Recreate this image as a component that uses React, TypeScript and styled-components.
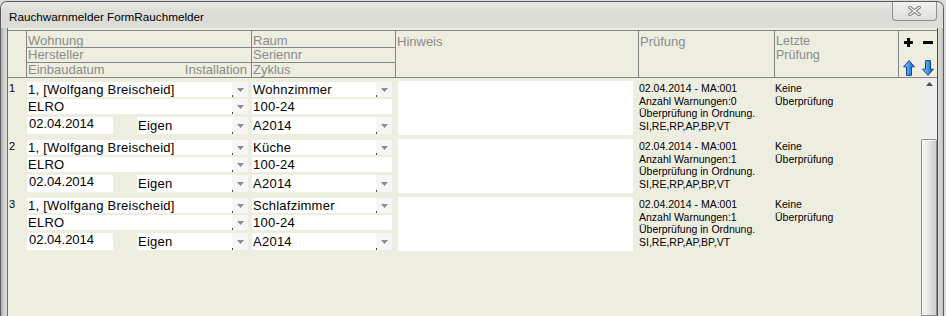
import React from "react";
import styled, { createGlobalStyle } from "styled-components";

const LINE = "#858585";
const FACE = "#eeeee0";
const COLS = "19px 225px 144px 243px 136px 124px 1fr";

const GlobalStyle = createGlobalStyle`
  *, *::before, *::after { box-sizing: border-box; }
  html, body { margin: 0; padding: 0; background: #dcdcdc; }
  body {
    width: 946px;
    height: 316px;
    overflow: hidden;
    font-family: "Liberation Sans", Arial, sans-serif;
  }
`;

type Rec = { n: number; raum: string; warn: number };

const records: Rec[] = [
  { n: 1, raum: "Wohnzimmer", warn: 0 },
  { n: 2, raum: "Küche", warn: 1 },
  { n: 3, raum: "Schlafzimmer", warn: 1 },
];

const Window = styled.div`
  width: 944px;
  height: 315px;
  margin-top: 1px;
  border: 1px solid #5c5c5c;
  border-bottom: none;
  border-radius: 7px 7px 0 0;
  background: linear-gradient(
    to right,
    #a3a8b2 0,
    #c7c9c8 2px,
    #d8d9d4 5px,
    #d8d9d4 calc(100% - 4px),
    #c2c3c1 100%
  );
  display: flex;
  flex-direction: column;
  overflow: hidden;
`;

const TitleBar = styled.div`
  height: 26px;
  flex-shrink: 0;
  display: flex;
  justify-content: space-between;
  align-items: flex-start;
  background: linear-gradient(#e9e9e5 0, #dbdcd5 45%, #dcddd6 100%);
`;

const Title = styled.div`
  padding: 8px 0 0 8px;
  font-size: 11.7px;
  line-height: 14px;
  color: #000;
`;

const CloseButton = styled.div`
  width: 45px;
  height: 19px;
  margin-right: 6px;
  border: 1px solid #8f8f8f;
  border-top: none;
  border-radius: 0 0 4px 4px;
  background: linear-gradient(#f1f1ef, #dededa);
  display: flex;
  align-items: center;
  justify-content: center;
`;

const Client = styled.div`
  flex: 1;
  margin: 0 5px 0 6px;
  border-left: 1px solid #6c6c6c;
  border-right: 1px solid #4c4c4c;
  background: ${FACE};
  padding-top: 2px;
  display: flex;
  flex-direction: column;
  min-height: 0;
`;

const Header = styled.div`
  display: grid;
  grid-template-columns: ${COLS};
  grid-template-rows: 17px 15px 14px;
  border-top: 1px solid ${LINE};
  border-bottom: 1px solid ${LINE};
  color: #8b8b8b;
  font-size: 13px;
  flex-shrink: 0;
`;

const HeadCell = styled.div<{ $col: number; $pad?: number; $tight?: boolean }>`
  grid-column: ${(p) => p.$col};
  grid-row: 1 / 4;
  border-right: 1px solid ${LINE};
  padding: ${(p) => p.$pad ?? 4}px 0 0 1px;
  font-size: ${(p) => (p.$tight ? 12.5 : 13)}px;
  line-height: ${(p) => (p.$tight ? 13.5 : 13)}px;
  white-space: nowrap;
  overflow: hidden;
`;

const SubCell = styled.div<{ $col: number; $row: number; $pad?: number }>`
  grid-column: ${(p) => p.$col};
  grid-row: ${(p) => p.$row};
  border-right: 1px solid ${LINE};
  border-bottom: ${(p) => (p.$row < 3 ? `1px solid ${LINE}` : "none")};
  padding: ${(p) => p.$pad ?? 0}px 4px 0 1px;
  line-height: ${(p) => (p.$row === 1 ? 12 : 13)}px;
  white-space: nowrap;
  overflow: hidden;
  display: flex;
  justify-content: space-between;
`;

const ToolCell = styled.div`
  grid-column: 7;
  grid-row: 1 / 4;
  padding-top: 3px;
  display: grid;
  grid-template-columns: 19px 19px;
  grid-template-rows: 17px 19px;
  row-gap: 7px;
  place-items: center;
`;

const Body = styled.div`
  flex: 1;
  display: flex;
  min-height: 0;
`;

const RecordList = styled.div`
  flex: 1;
`;

const Record = styled.div`
  display: grid;
  grid-template-columns: ${COLS};
  height: 58px;
  align-items: start;
`;

const RowNum = styled.div`
  margin-top: 4px;
  padding-left: 1px;
  font-size: 11px;
  line-height: 13px;
  color: #000;
`;

const Stack = styled.div`
  margin-top: 4px;
  padding-right: 4px;
  display: flex;
  flex-direction: column;
  gap: 2px;
`;

const Field = styled.div<{ $h?: number }>`
  height: ${(p) => p.$h ?? 15}px;
  line-height: ${(p) => p.$h ?? 15}px;
  background: #fff;
  display: flex;
  font-size: 13px;
  letter-spacing: 0.25px;
  color: #000;
`;

const FieldText = styled.span`
  flex: 1;
  padding-left: 1px;
  white-space: nowrap;
  overflow: hidden;
`;

const Arrow = styled.span`
  position: relative;
  width: 16px;
  flex-shrink: 0;
  background: #f6f6f6;
  display: flex;
  align-items: center;
  justify-content: center;

  &::before {
    content: "";
    position: absolute;
    left: 0;
    bottom: 0;
    width: 1px;
    height: 2px;
    background: #4a4a4a;
  }
`;

const SplitRow = styled.div`
  display: flex;
  gap: 24px;
  margin-top: 1px;
`;

const Grow = styled.div`
  flex: 1;
`;

const DateBox = styled.div`
  width: 86px;
  height: 17px;
  line-height: 14px;
  padding-left: 2px;
  background: #fff;
  font-size: 13px;
  color: #000;
`;

const NoteBox = styled.div`
  margin: 3px 0 0 2px;
  width: 235px;
  height: 54px;
  background: #fff;
`;

const Notes = styled.div`
  margin-top: 4px;
  font-size: 10.5px;
  line-height: 12.5px;
  color: #000;
  white-space: nowrap;
`;

const Scrollbar = styled.div`
  width: 16px;
  background: #ededed;
  display: flex;
  flex-direction: column;
`;

const ScrollUp = styled.div`
  height: 17px;
  display: flex;
  align-items: center;
  justify-content: center;
  padding-bottom: 1px;
`;

const Thumb = styled.div`
  margin-top: 47px;
  height: 220px;
  border: 1px solid #8e8e8e;
  border-radius: 2px 2px 0 0;
  box-shadow: inset 1px 1px 0 #fbfbfb;
  background: linear-gradient(to right, #f2f2f2 0, #eaeaea 40%, #d8d8d8 75%, #cfcfcf 100%);
`;

const Combo = ({ text, h }: { text: string; h?: number }) => (
  <Field $h={h}>
    <FieldText>{text}</FieldText>
    <Arrow>
      <svg width="7" height="4" viewBox="0 0 7 4">
        <path d="M0 0h7L3.5 4z" fill="#8b8b8b" />
      </svg>
    </Arrow>
  </Field>
);

const PlusIcon = () => (
  <svg width="9" height="9" viewBox="0 0 9 9">
    <path d="M3 0h3v3h3v3H6v3H3V6H0V3h3z" fill="#000" />
  </svg>
);

const MinusIcon = () => (
  <svg width="10" height="3" viewBox="0 0 10 3">
    <rect width="10" height="3" fill="#000" />
  </svg>
);

const MoveArrow = ({ down }: { down?: boolean }) => (
  <svg
    width="12"
    height="16"
    viewBox="0 0 12 16"
    style={down ? { transform: "scaleY(-1)" } : undefined}
  >
    <defs>
      <linearGradient id={down ? "gd" : "gu"} x1="0" y1="0" x2="1" y2="0">
        <stop offset="0" stopColor="#9ad6ff" />
        <stop offset="0.5" stopColor="#3d97e8" />
        <stop offset="1" stopColor="#1556b8" />
      </linearGradient>
    </defs>
    <path
      d="M6 0.6 L11.4 6.8 L8.5 6.8 L8.5 15.4 L3.5 15.4 L3.5 6.8 L0.6 6.8 Z"
      fill={`url(#${down ? "gd" : "gu"})`}
      stroke="#1b3f8f"
      strokeWidth="1"
    />
  </svg>
);

const CloseGlyph = () => (
  <svg width="13" height="10" viewBox="0 0 13 10">
    <path d="M2 1.5L11 8.5M11 1.5L2 8.5" stroke="#7c7c7c" strokeWidth="3.4" strokeLinecap="square" />
    <path d="M2 1.5L11 8.5M11 1.5L2 8.5" stroke="#fdfdfd" strokeWidth="1.3" strokeLinecap="square" />
  </svg>
);

const RecordRow = ({ rec }: { rec: Rec }) => (
  <Record>
    <RowNum>{rec.n}</RowNum>
    <Stack>
      <Combo text="1, [Wolfgang Breischeid]" />
      <Combo text="ELRO" />
      <SplitRow>
        <DateBox>02.04.2014</DateBox>
        <Grow>
          <Combo text="Eigen" h={17} />
        </Grow>
      </SplitRow>
    </Stack>
    <Stack>
      <Combo text={rec.raum} />
      <Field>
        <FieldText>100-24</FieldText>
      </Field>
      <SplitRow>
        <Grow>
          <Combo text="A2014" h={17} />
        </Grow>
      </SplitRow>
    </Stack>
    <NoteBox />
    <Notes>
      02.04.2014 - MA:001
      <br />
      Anzahl Warnungen:{rec.warn}
      <br />
      Überprüfung in Ordnung.
      <br />
      SI,RE,RP,AP,BP,VT
    </Notes>
    <Notes>
      Keine
      <br />
      Überprüfung
    </Notes>
  </Record>
);

export default function App() {
  return (
    <>
      <GlobalStyle />
      <Window>
        <TitleBar>
          <Title>Rauchwarnmelder FormRauchmelder</Title>
          <CloseButton>
            <CloseGlyph />
          </CloseButton>
        </TitleBar>
        <Client>
          <Header>
            <HeadCell $col={1} />
            <SubCell $col={2} $row={1} $pad={4}>
              Wohnung
            </SubCell>
            <SubCell $col={2} $row={2}>
              Hersteller
            </SubCell>
            <SubCell $col={2} $row={3}>
              <span>Einbaudatum</span>
              <span>Installation</span>
            </SubCell>
            <SubCell $col={3} $row={1} $pad={4}>
              Raum
            </SubCell>
            <SubCell $col={3} $row={2}>
              Seriennr
            </SubCell>
            <SubCell $col={3} $row={3}>
              Zyklus
            </SubCell>
            <HeadCell $col={4}>Hinweis</HeadCell>
            <HeadCell $col={5}>Prüfung</HeadCell>
            <HeadCell $col={6} $tight>
              Letzte
              <br />
              Prüfung
            </HeadCell>
            <ToolCell>
              <PlusIcon />
              <MinusIcon />
              <MoveArrow />
              <MoveArrow down />
            </ToolCell>
          </Header>
          <Body>
            <RecordList>
              {records.map((r) => (
                <RecordRow key={r.n} rec={r} />
              ))}
            </RecordList>
            <Scrollbar>
              <ScrollUp>
                <svg width="7" height="4" viewBox="0 0 7 4">
                  <path d="M3.5 0L7 4H0z" fill="#4e4e4e" />
                </svg>
              </ScrollUp>
              <Thumb />
            </Scrollbar>
          </Body>
        </Client>
      </Window>
    </>
  );
}
